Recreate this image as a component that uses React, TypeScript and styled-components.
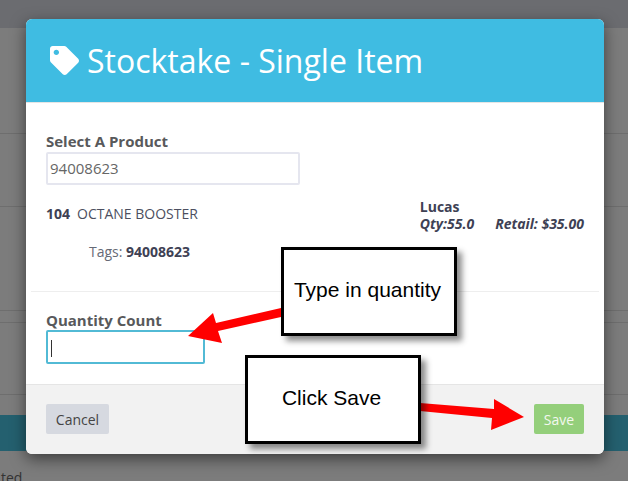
import React from "react"
import styled, { createGlobalStyle } from "styled-components"
import { FaTag } from "react-icons/fa"

const GlobalStyle = createGlobalStyle`
	html, body {
		margin: 0;
		padding: 0;
		background: #7c7c7c;
		overflow: hidden;
	}
`

const App: React.FC = () => {
	return (
		<Page>
			<GlobalStyle />
			<TopBar />
			<PageRow $height={106} />
			<PageRow $height={73} />
			<PageRow $height={104} />
			<PageRow $height={12} />
			<PageRow $height={72} />
			<PageSpacer />
			<TealBand />
			<PageText>ted</PageText>

			<Modal>
				<ModalHeader>
					<FaTag size={29} />
					<ModalTitle>Stocktake - Single Item</ModalTitle>
				</ModalHeader>
				<ModalBody>
					<Label>Select A Product</Label>
					<ProductInput readOnly value="94008623" />
					<ProductRow>
						<ProductName>
							<b>104</b>
							<span>OCTANE BOOSTER</span>
						</ProductName>
						<ProductMeta>
							<Brand>Lucas</Brand>
							<MetaLine>
								<span>Qty:55.0</span>
								<span>Retail: $35.00</span>
							</MetaLine>
						</ProductMeta>
					</ProductRow>
					<Tags>
						Tags: <b>94008623</b>
					</Tags>
				</ModalBody>
				<Divider />
				<CountSection>
					<CountLabel>Quantity Count</CountLabel>
					<CountInput>
						<Caret />
					</CountInput>
				</CountSection>
				<ModalFooter>
					<CancelButton>Cancel</CancelButton>
					<SaveButton>Save</SaveButton>
				</ModalFooter>
			</Modal>

			<Arrow viewBox="0 0 628 481">
				<polygon points="188,336 213,313 216,323 281,308 281,317 218,331 222,343" fill="#ff0000" />
				<polygon points="524,417 494,399 494,409 420,403 420,411 492,418 491,430" fill="#ff0000" />
			</Arrow>
			<Callout $left={281} $top={247}>Type in quantity</Callout>
			<Callout $left={245} $top={355}>Click Save</Callout>
		</Page>
	)
}

const Page = styled.div`
	position: relative;
	display: flex;
	flex-direction: column;
	width: 628px;
	height: 481px;
	overflow: hidden;
	background: #7c7c7c;
	font-family: "Open Sans", sans-serif;
`

const TopBar = styled.div`
	flex: none;
	height: 28px;
	background: #6b6c70;
`

const PageRow = styled.div<{ $height: number }>`
	flex: none;
	height: ${(props): number => props.$height}px;
	border-bottom: 1px solid #6e6e6e;
	box-sizing: border-box;
`

const PageSpacer = styled.div`
	flex: none;
	height: 20px;
`

const TealBand = styled.div`
	flex: none;
	height: 36px;
	background: #24606f;
`

const PageText = styled.div`
	flex: none;
	padding: 17px 0 0 1px;
	font-size: 14px;
	line-height: 19px;
	color: #333;
`

const Modal = styled.div`
	position: absolute;
	left: 26px;
	top: 19px;
	display: flex;
	flex-direction: column;
	width: 578px;
	height: 435px;
	background: #fff;
	border-radius: 6px;
	overflow: hidden;
	box-shadow: 0 5px 15px rgba(0, 0, 0, 0.5);
`

const ModalHeader = styled.div`
	display: flex;
	flex: none;
	align-items: center;
	gap: 8px;
	box-sizing: border-box;
	height: 84px;
	padding: 0 24px;
	background: #3fbce2;
	border-bottom: 1px solid #e5e5e5;
	color: #fff;
`

const ModalTitle = styled.h4`
	margin: 0;
	font-size: 32px;
	font-weight: 400;
	line-height: 40px;
`

const ModalBody = styled.div`
	display: flex;
	flex: none;
	flex-direction: column;
	height: 188px;
	box-sizing: border-box;
	padding: 30px 20px 0;
`

const Label = styled.label`
	display: block;
	margin-top: -2px;
	margin-bottom: 1px;
	font-size: 15px;
	font-weight: 700;
	line-height: 20px;
	color: #58595b;
`

const CountLabel = styled(Label)`
	margin-top: -1px;
	margin-bottom: 0;
`

const ProductInput = styled.input`
	box-sizing: border-box;
	width: 254px;
	height: 33px;
	padding: 0 2px 2px;
	border: 2px solid #e5e6ef;
	border-radius: 2px;
	outline: none;
	font-family: inherit;
	font-size: 15px;
	color: #666;
`

const ProductRow = styled.div`
	display: flex;
	justify-content: space-between;
	margin-top: 13px;
	color: #3e4154;
`

const ProductName = styled.div`
	display: flex;
	gap: 7px;
	margin-top: 6px;
	font-size: 14px;
	line-height: 19px;

	span {
		color: #4c4f60;
		font-size: 14px;
	}
`

const ProductMeta = styled.div`
	font-size: 14px;
	font-weight: 700;
	line-height: 17px;
`

const Brand = styled.div``

const MetaLine = styled.div`
	display: flex;
	gap: 21px;
	font-style: italic;
	font-size: 14px;
`

const Tags = styled.div`
	margin: 10px 0 0 43px;
	font-size: 14px;
	line-height: 19px;
	color: #666a76;

	b {
		color: #3e4154;
	}
`

const Divider = styled.hr`
	flex: none;
	width: 568px;
	margin: 0 0 0 5px;
	border: none;
	border-top: 1px solid #eeeeee;
`

const CountSection = styled.div`
	flex: 1;
	padding: 19px 20px 0;
`

const CountInput = styled.div`
	display: flex;
	align-items: center;
	box-sizing: border-box;
	width: 159px;
	height: 34px;
	padding-left: 3px;
	border: 2px solid #52bad5;
	border-radius: 2px;
`

const Caret = styled.div`
	width: 1px;
	height: 17px;
	margin-top: 3px;
	background: #333;
`

const ModalFooter = styled.div`
	display: flex;
	flex: none;
	justify-content: space-between;
	align-items: center;
	box-sizing: border-box;
	height: 70px;
	padding: 0 20px 1px;
	background: #f2f2f2;
	border-top: 1px solid #e5e5e5;
`

const FooterButton = styled.button`
	height: 30px;
	padding: 0;
	border: none;
	border-radius: 2px;
	font-family: inherit;
	font-size: 14px;
`

const CancelButton = styled(FooterButton)`
	width: 63px;
	background: #d6d9e0;
	color: #444;
`

const SaveButton = styled(FooterButton)`
	width: 50px;
	background: #94cf7b;
	color: #f3f8ef;
`

const Arrow = styled.svg`
	position: absolute;
	left: 0;
	top: 0;
	width: 628px;
	height: 481px;
`

const Callout = styled.div<{ $left: number; $top: number }>`
	position: absolute;
	left: ${(props): number => props.$left}px;
	top: ${(props): number => props.$top}px;
	box-sizing: border-box;
	width: 176px;
	height: 89px;
	padding: 28px 3px 0 0;
	background: #fff;
	border: 3px solid #000;
	box-shadow: 5px 5px 6px rgba(0, 0, 0, 0.45);
	font-family: "Liberation Sans", Arial, sans-serif;
	font-size: 21px;
	line-height: 24px;
	color: #000;
	text-align: center;
`

export default App
